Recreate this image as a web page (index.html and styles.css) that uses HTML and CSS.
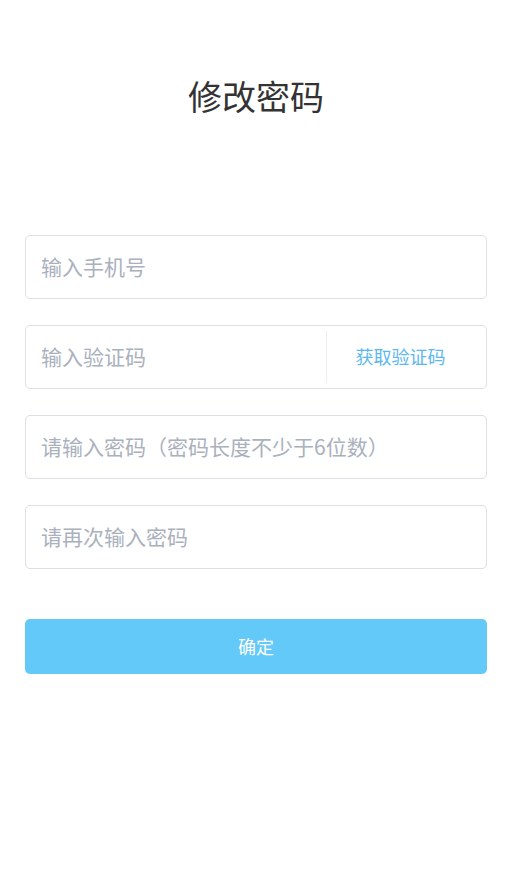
FILE: index.html
```html
<!DOCTYPE html>
<html lang="zh">
<head>
<meta charset="utf-8">
<link rel="stylesheet" href="styles.css">
</head>
<body>
<div class="page">
  <h1 class="title">修改密码</h1>
  <form class="form">
    <div class="field"><input class="input" placeholder="输入手机号"></div>
    <div class="field">
      <input class="input" placeholder="输入验证码">
      <span class="code-btn">获取验证码</span>
    </div>
    <div class="field"><input class="input" placeholder="请输入密码（密码长度不少于6位数）"></div>
    <div class="field"><input class="input" placeholder="请再次输入密码"></div>
    <button type="button" class="submit">确定</button>
  </form>
</div>
</body>
</html>
```

FILE: styles.css
```css
* { box-sizing: border-box; }
html, body { margin: 0; background: #fff; }
body {
  font-family: "Noto Sans CJK SC", "Noto Sans", sans-serif;
}
.page {
  padding: 0 33px 0 25px;
}
.title {
  margin: 0;
  padding-top: 71px;
  height: 235px;
  width: 462px;
  text-align: center;
  font-size: 34px;
  line-height: 50px;
  font-weight: 400;
  color: #333;
}
.form {
  display: flex;
  flex-direction: column;
  gap: 26px;
  width: 462px;
}
.field {
  display: flex;
  align-items: center;
  height: 64px;
  border: 1px solid #dcdfe3;
  border-radius: 5px;
  background: #fff;
}
.input {
  flex: 1;
  min-width: 0;
  height: 100%;
  border: 0;
  outline: none;
  background: transparent;
  padding: 0 0 3px 15px;
  font-family: inherit;
  font-size: 21px;
  color: #333;
}
.input::placeholder { color: #aab1bd; }
.code-btn {
  display: flex;
  align-items: center;
  justify-content: center;
  width: 160px;
  height: 52px;
  border-left: 1px solid #eceef1;
  padding: 0 12px 2px 0;
  font-size: 18px;
  color: #5db8ef;
}
.submit {
  margin-top: 24px;
  height: 55px;
  border: 0;
  border-radius: 5px;
  background: #63c9f8;
  color: #fff;
  font-family: inherit;
  font-size: 18px;
  padding-bottom: 2px;
}
```
